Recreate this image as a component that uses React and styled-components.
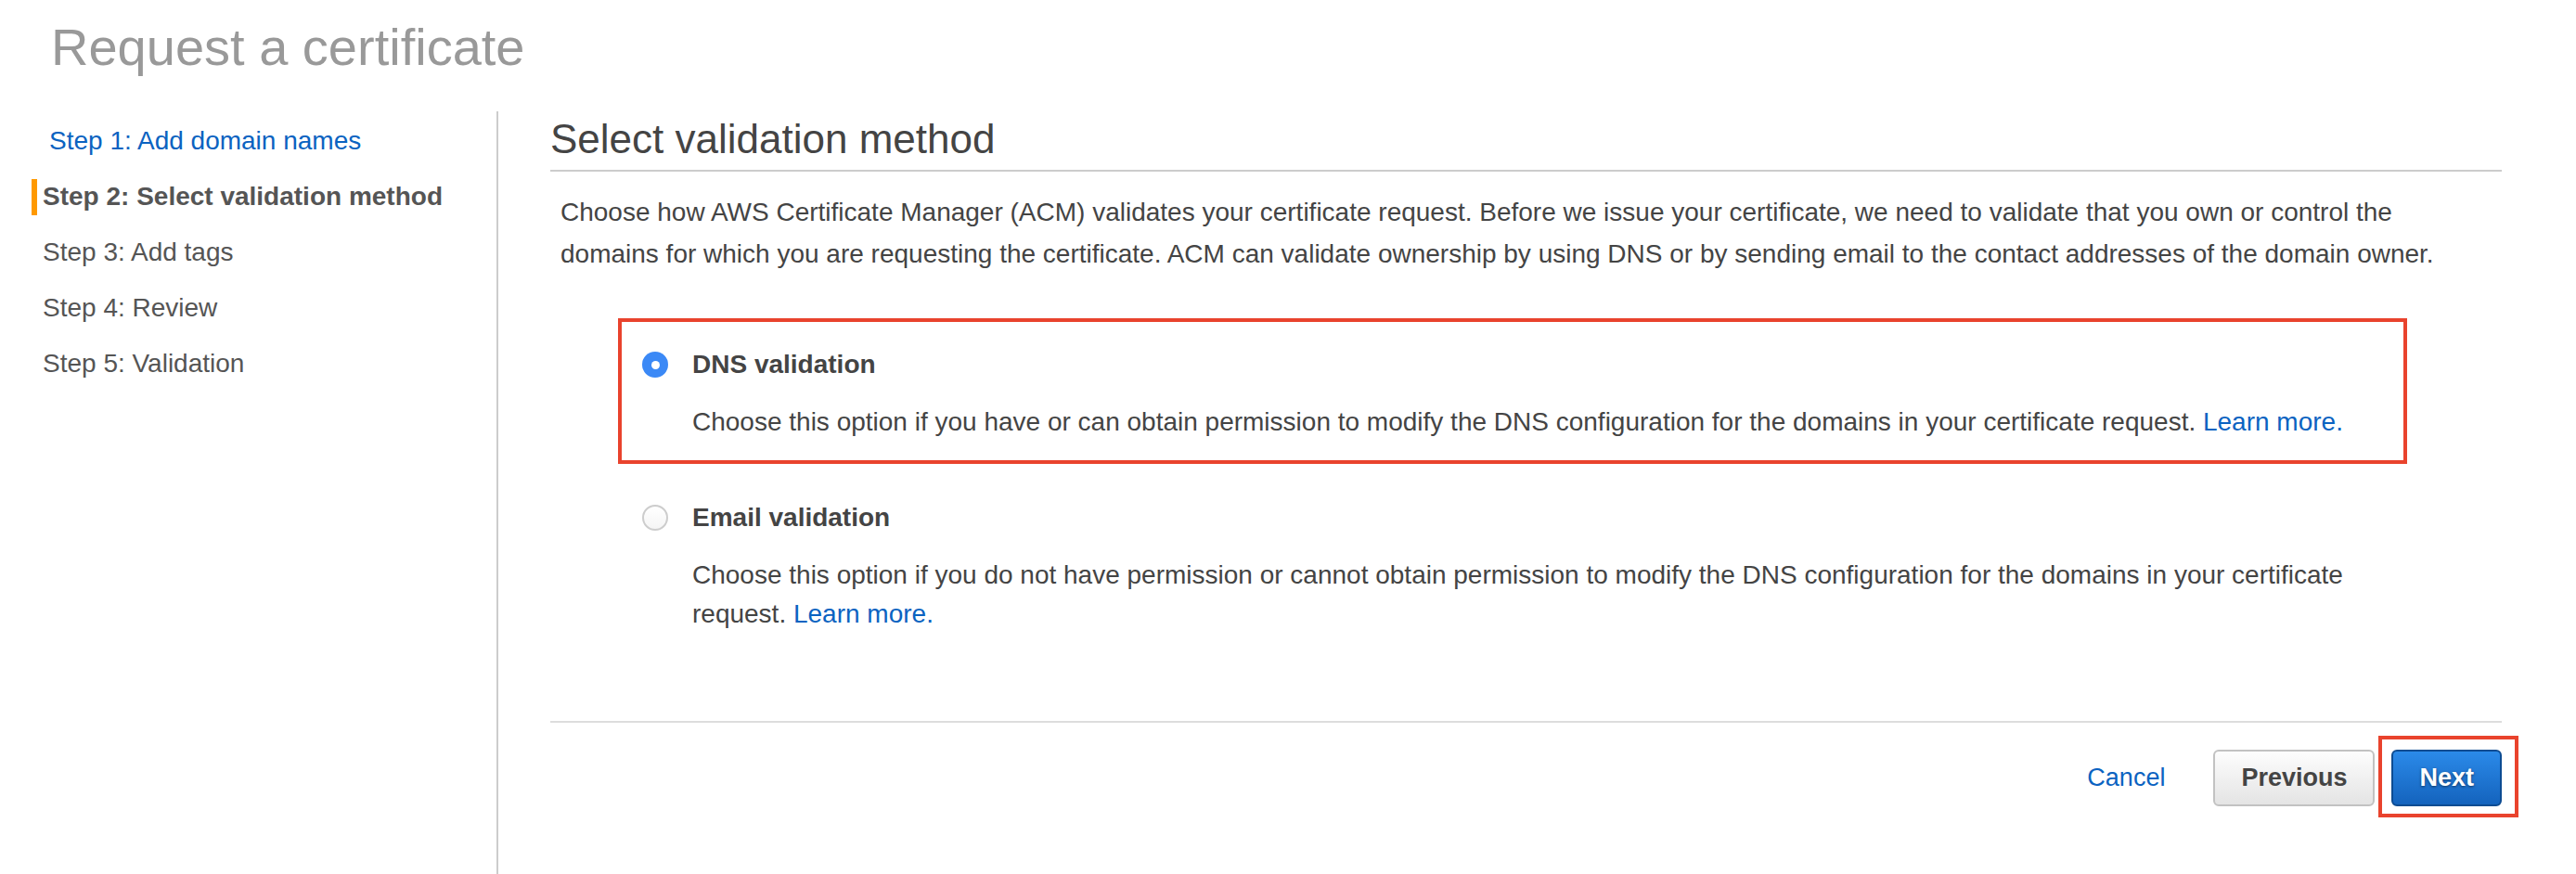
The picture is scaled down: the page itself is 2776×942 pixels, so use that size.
import React from "react";
import styled, { createGlobalStyle } from "styled-components";

const COLORS = {
  text: "#444444",
  muted: "#555555",
  title: "#999999",
  link: "#0b63c1",
  rule: "#cccccc",
  orange: "#ff9900",
  annotate: "#e9432d",
  radio: "#3b89f6",
};

const GlobalStyle = createGlobalStyle`
  html, body, #root {
    margin: 0;
    padding: 0;
    height: 100%;
  }
  body {
    background: #ffffff;
    font-family: "Liberation Sans", Arial, Helvetica, sans-serif;
    color: ${COLORS.text};
  }
`;

const steps = [
  { label: "Step 1: Add domain names", state: "done" },
  { label: "Step 2: Select validation method", state: "active" },
  { label: "Step 3: Add tags" },
  { label: "Step 4: Review" },
  { label: "Step 5: Validation" },
];

const options = [
  {
    id: "dns",
    title: "DNS validation",
    text: "Choose this option if you have or can obtain permission to modify the DNS configuration for the domains in your certificate request.",
    checked: true,
  },
  {
    id: "email",
    title: "Email validation",
    text: "Choose this option if you do not have permission or cannot obtain permission to modify the DNS configuration for the domains in your certificate request.",
    checked: false,
  },
];

const App = () => {
  return (
    <Page>
      <GlobalStyle />
      <Title>Request a certificate</Title>
      <Layout>
        <Sidebar>
          {steps.map((step) => (
            <Step key={step.label} state={step.state}>
              <Marker active={step.state === "active"} />
              <StepLabel state={step.state}>{step.label}</StepLabel>
            </Step>
          ))}
        </Sidebar>
        <Main>
          <Heading>Select validation method</Heading>
          <Intro>
            Choose how AWS Certificate Manager (ACM) validates your certificate
            request. Before we issue your certificate, we need to validate that
            you own or control the domains for which you are requesting the
            certificate. ACM can validate ownership by using DNS or by sending
            email to the contact addresses of the domain owner.
          </Intro>
          <Options>
            {options.map((opt) => (
              <Option key={opt.id} highlighted={opt.checked}>
                <Radio checked={opt.checked} />
                <OptionTitle>{opt.title}</OptionTitle>
                <OptionText>
                  {opt.text} <Link>Learn more.</Link>
                </OptionText>
              </Option>
            ))}
          </Options>
          <Footer>
            <Cancel>Cancel</Cancel>
            <SecondaryButton>Previous</SecondaryButton>
            <Marked>
              <PrimaryButton>Next</PrimaryButton>
            </Marked>
          </Footer>
        </Main>
      </Layout>
    </Page>
  );
};

const Page = styled.div`
  display: flex;
  flex-direction: column;
  min-height: 100%;
  box-sizing: border-box;
`;

const Title = styled.h1`
  margin: 23px 0 0 55px;
  height: 97px;
  font-size: 56px;
  line-height: 56px;
  font-weight: normal;
  color: ${COLORS.title};
`;

const Layout = styled.div`
  flex: 1;
  display: flex;
`;

const Sidebar = styled.nav`
  width: 535px;
  flex-shrink: 0;
  padding-top: 2px;
  border-right: 2px solid ${COLORS.rule};
`;

const Step = styled.div`
  display: flex;
  align-items: center;
  height: 60px;
  padding-left: 34px;
`;

const Marker = styled.span`
  width: 6px;
  height: 39px;
  background: ${(p) => (p.active ? COLORS.orange : "transparent")};
`;

const StepLabel = styled.span`
  margin-left: ${(p) => (p.state === "done" ? "13px" : "6px")};
  font-size: 28px;
  line-height: 40px;
  font-weight: ${(p) => (p.state === "active" ? "bold" : "normal")};
  color: ${(p) =>
    p.state === "done" ? COLORS.link : p.state === "active" ? "#555" : COLORS.muted};
`;

const Main = styled.main`
  flex: 1;
  margin: 0 80px 0 56px;
  padding-top: 3px;
`;

const Heading = styled.h2`
  margin: 0;
  padding-bottom: 7px;
  font-size: 44px;
  line-height: 53px;
  font-weight: normal;
  color: ${COLORS.text};
  border-bottom: 2px solid ${COLORS.rule};
`;

const Intro = styled.p`
  margin: 21px 0 0;
  padding: 0 11px;
  font-size: 28px;
  line-height: 45px;
`;

const Options = styled.div`
  display: flex;
  flex-direction: column;
  gap: 8px;
  margin: 47px 102px 0 73px;
`;

const Option = styled.div`
  display: grid;
  grid-template-columns: 28px 1fr;
  column-gap: 26px;
  row-gap: 21px;
  align-items: center;
  padding: 26px 20px 20px 22px;
  border: 4px solid ${(p) => (p.highlighted ? COLORS.annotate : "transparent")};
`;

const Radio = styled.span`
  width: 28px;
  height: 28px;
  border-radius: 50%;
  box-sizing: border-box;
  position: relative;
  ${(p) =>
    p.checked
      ? `
    background: ${COLORS.radio};
    &::after {
      content: "";
      position: absolute;
      left: 9.5px;
      top: 9.5px;
      width: 9px;
      height: 9px;
      border-radius: 50%;
      background: #fff;
    }
  `
      : `
    background: linear-gradient(#ffffff, #f5f5f5);
    border: 2px solid #cdcdcd;
  `}
`;

const OptionTitle = styled.div`
  font-size: 28px;
  line-height: 40px;
  font-weight: bold;
  color: ${COLORS.text};
`;

const OptionText = styled.div`
  grid-column: 2;
  font-size: 28px;
  line-height: 42px;
  color: ${COLORS.text};
`;

const Link = styled.a`
  color: ${COLORS.link};
  text-decoration: none;
  cursor: pointer;
`;

const Footer = styled.div`
  display: flex;
  justify-content: flex-end;
  align-items: center;
  margin-top: 70px;
  padding-top: 29px;
  border-top: 2px solid #dddddd;
`;

const Cancel = styled(Link)`
  font-size: 27px;
  margin-right: 52px;
`;

const Button = styled.button`
  height: 61px;
  padding: 0 28px;
  border-radius: 6px;
  font-family: inherit;
  font-size: 27px;
  font-weight: bold;
  cursor: pointer;
`;

const SecondaryButton = styled(Button)`
  color: #444;
  background: linear-gradient(#fdfdfd, #e4e4e4);
  border: 2px solid #c2c2c2;
`;

const PrimaryButton = styled(Button)`
  color: #fff;
  background: linear-gradient(#2b8ae9, #1463bd);
  border: 2px solid #0d4c92;
  text-shadow: 0 1px 3px rgba(0, 0, 0, 0.55);
`;

const Marked = styled.span`
  position: relative;
  display: inline-flex;
  margin-left: 18px;
  &::after {
    content: "";
    position: absolute;
    inset: -15px -18px -12px -14px;
    border: 4px solid ${COLORS.annotate};
    pointer-events: none;
  }
`;

export default App;
